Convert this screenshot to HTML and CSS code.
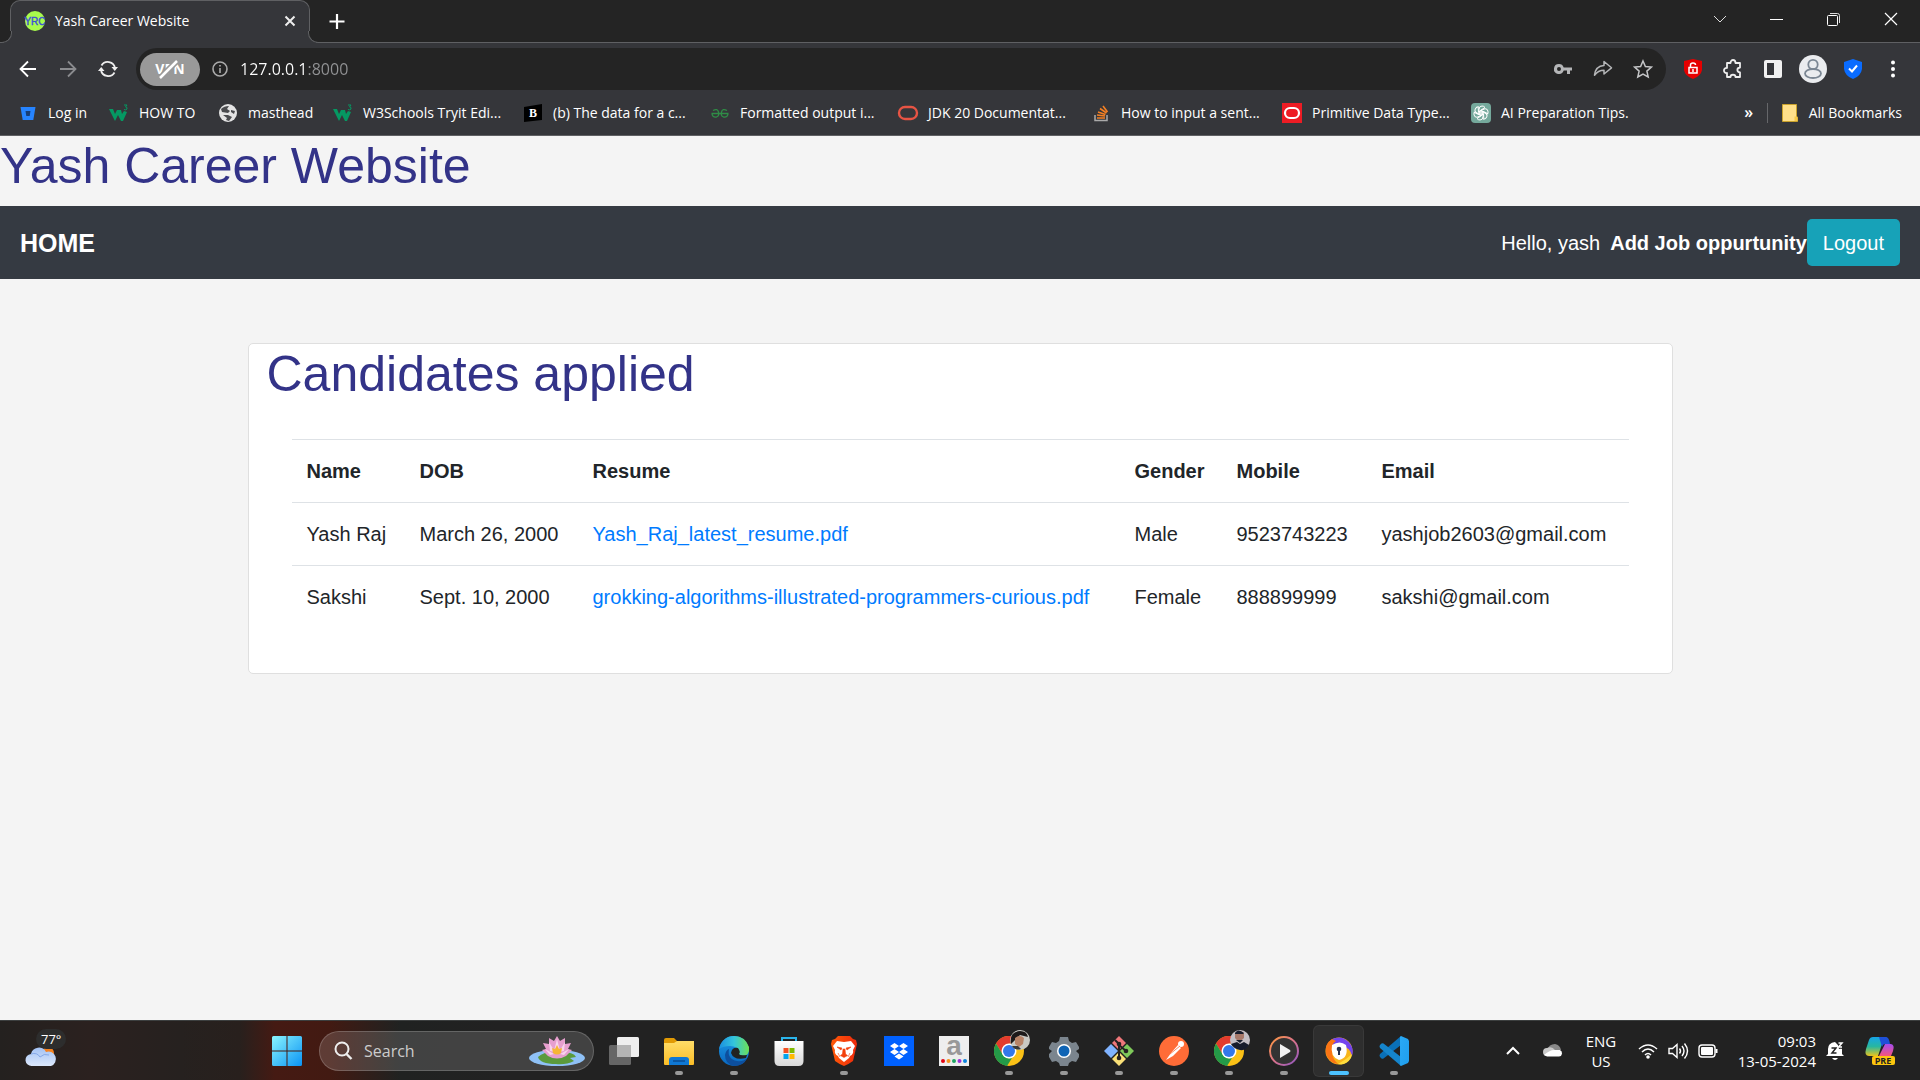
FILE: index.html
```html
<!DOCTYPE html>
<html lang="en">
<head>
<meta charset="utf-8">
<meta name="viewport" content="width=device-width, initial-scale=1">
<title>Yash Career Website</title>
<link rel="stylesheet" href="styles.css">
</head>
<body>
<svg class="defs" aria-hidden="true">
  <defs>
    <symbol id="w3" viewBox="0 0 20 20"><path d="M0 6h4l2 5 2-4h4l1 4 2-3 3 1-4 9h-2l-3-6-3 6H6z" fill="#059862"/><path d="M15 2h3l-1.500 2q2 0 1.500 2-1 1.500-3 .5" fill="none" stroke="#059862"/></symbol>
    <symbol id="chrome" viewBox="0 0 30 30"><circle cx="15" cy="15" r="15" fill="#fbc116"/><path d="M2 7.500A15 15 0 0 1 28 7.500H15L9 19z" fill="#e33b2e"/><path d="M2 7.500L9 19l6 3.500 3-.5-5 8A15 15 0 0 1 2 7.500z" fill="#249a48"/><circle cx="15" cy="15" r="7.500" fill="#fff"/><circle cx="15" cy="15" r="6" fill="#3478ea"/></symbol>
    <linearGradient id="win" x1="0" y1="0" x2="1" y2="1"><stop stop-color="#8af4fd"/><stop offset="1" stop-color="#0a93f5"/></linearGradient>
    <linearGradient id="folder" x1="0" y1="0" x2="0" y2="1"><stop stop-color="#ffdd68"/><stop offset="1" stop-color="#fbbd27"/></linearGradient>
    <linearGradient id="edgeA" x1="0" y1="0" x2="1" y2="0"><stop stop-color="#1b8fe0"/><stop offset=".5" stop-color="#34c5dc"/><stop offset="1" stop-color="#6de154"/></linearGradient>
    <linearGradient id="edgeB" x1="0" y1="0" x2="0" y2="1"><stop stop-color="#1d9be6"/><stop offset="1" stop-color="#0967c0"/></linearGradient>
    <linearGradient id="bag" x1="0" y1="0" x2="0" y2="1"><stop stop-color="#fff"/><stop offset="1" stop-color="#d8d8d8"/></linearGradient>
    <linearGradient id="lion" x1="0" y1="0" x2="1" y2="0"><stop stop-color="#ff5a08"/><stop offset="1" stop-color="#ee2a0c"/></linearGradient>
    <linearGradient id="play" x1="0" y1="0" x2="1" y2="1"><stop stop-color="#ff9a3c"/><stop offset=".5" stop-color="#d9728c"/><stop offset="1" stop-color="#8c55c4"/></linearGradient>
    <linearGradient id="code" x1="0" y1="0" x2="1" y2="1"><stop stop-color="#2aa9f5"/><stop offset="1" stop-color="#1f9eee"/></linearGradient>
    <linearGradient id="cloud" x1="0" y1="0" x2="0" y2="1"><stop stop-color="#a3c2f4"/><stop offset="1" stop-color="#dce8fb"/></linearGradient>
    <linearGradient id="copA" x1="0" y1="0" x2="0" y2="1"><stop stop-color="#16a5e8"/><stop offset=".5" stop-color="#27b7a0"/><stop offset="1" stop-color="#e9c41e"/></linearGradient>
    <linearGradient id="copB" x1="0" y1="0" x2="0" y2="1"><stop stop-color="#a54cf0"/><stop offset="1" stop-color="#f5557a"/></linearGradient>
  </defs>
</svg>

<header class="browser">
  <div class="tabstrip">
    <div class="tab">
      <svg class="i20" viewBox="0 0 20 20"><circle cx="10" cy="10" r="10" fill="#a8fb4c"/><text x="10" y="14" text-anchor="middle" font-family="Liberation Sans" font-size="10" fill="#3d4fd8" stroke="#3d4fd8" stroke-width=".4">YRC</text></svg>
      <span class="tab-title">Yash Career Website</span>
      <button class="tab-close" aria-label="Close tab"><svg class="i12" viewBox="0 0 12 12"><path d="M1.500 1.500l9 9m0-9l-9 9" stroke="#eee" stroke-width="2"/></svg></button>
    </div>
    <button class="new-tab" aria-label="New tab"><svg class="i20" viewBox="0 0 20 20"><path d="M10 3v15M2.500 10.500h15" stroke="#fff" stroke-width="2.200"/></svg></button>
    <div class="window-buttons">
      <button aria-label="Search tabs"><svg class="i16" viewBox="0 0 16 16"><path d="M2 5l6 6 6-6" fill="none" stroke="#ddd"/></svg></button>
      <button aria-label="Minimize"><svg class="i16" viewBox="0 0 16 16"><path d="M1 8.500h13" stroke="#fff"/></svg></button>
      <button aria-label="Restore"><svg class="i16" viewBox="0 0 16 16"><rect x="1.500" y="4.500" width="10" height="10" rx="1" fill="none" stroke="#fff"/><path d="M4 2.500h7.500q2 0 2 2V12" fill="none" stroke="#ddd"/></svg></button>
      <button aria-label="Close"><svg class="i16" viewBox="0 0 16 16"><path d="M2 2l12 12m0-12L2 14" stroke="#fff" stroke-width="1.200"/></svg></button>
    </div>
  </div>

  <div class="toolbar">
    <button class="tool" aria-label="Back"><svg class="i20" viewBox="0 0 20 20"><path d="M18 10H3M10 2.500L2.500 10l7.500 7.500" fill="none" stroke="#fff" stroke-width="1.800"/></svg></button>
    <button class="tool" aria-label="Forward"><svg class="i20" viewBox="0 0 20 20"><path d="M2 10h15M10 2.500l7.500 7.500-7.500 7.500" fill="none" stroke="#8b8c8f" stroke-width="1.800"/></svg></button>
    <button class="tool" aria-label="Reload"><svg class="i20" viewBox="0 0 20 20"><path d="M3.500 6.500A7.300 7.300 0 0 1 17 9M3 11a7.300 7.300 0 0 0 13.500 2.500" fill="none" stroke="#eee" stroke-width="1.800"/><path d="M13.500 8H20l-3.200 4zM0 12h6.500L3.200 8z" fill="#eee"/></svg></button>
    <div class="omnibox">
      <button class="vpn" aria-label="VPN off">VPN<svg class="vpn-slash" viewBox="0 0 22 22"><path d="M2 20L19 3" stroke="#999" stroke-width="6"/><path d="M2 20L19 3" stroke="#fff" stroke-width="2.500"/></svg></button>
      <button class="tool" aria-label="Site information"><svg class="i16" viewBox="0 0 16 16"><circle cx="8" cy="8" r="7" fill="none" stroke="#aaa" stroke-width="1.600"/><path d="M8 7v5M8 4v1.600" stroke="#aaa" stroke-width="1.600"/></svg></button>
      <input class="address" type="text" aria-label="Address" value="127.0.0.1:8000">
      <button class="tool" aria-label="Passwords"><svg class="i20" viewBox="0 0 20 20"><path d="M6 5a5 5 0 1 0 4.700 6.600H14V15h3v-3.400h2V8.400h-8.300A5 5 0 0 0 6 5zm0 3a2 2 0 1 1 0 4 2 2 0 0 1 0-4z" fill="#b5b6b8" fill-rule="evenodd"/></svg></button>
      <button class="tool" aria-label="Share"><svg class="i20" viewBox="0 0 20 20"><path d="M11 2.500l7.500 6.300-7.500 6.200v-3.800q-6 0-9.500 5Q2.500 7 11 6.500z" fill="none" stroke="#b5b6b8" stroke-width="1.500" stroke-linejoin="round"/></svg></button>
      <button class="tool" aria-label="Bookmark this page"><svg class="i20" viewBox="0 0 20 20"><path d="M10 2l2.400 5.500 6 .6-4.500 4 1.300 5.900L10 15l-5.200 3 1.300-5.900-4.500-4 6-.6z" fill="none" stroke="#c5c6c8" stroke-width="1.500"/></svg></button>
    </div>
    <button class="tool" aria-label="Ad blocker"><svg class="i20" viewBox="0 0 20 20"><path d="M10 0l9 2v9q-1 6-9 9-8-3-9-9V2z" fill="#e60000"/><path d="M6 8.500h8V14H6zM7.500 8V6q0-2 2.500-2t2.500 2M10 10v3" fill="none" stroke="#fff" stroke-width="1.500"/></svg></button>
    <button class="tool" aria-label="Extensions"><svg class="i20" viewBox="0 0 20 20"><path d="M4 4h3.500c0-4 5-4 5 0h4.500v4.500c-3.500.5-3.500 4.500 0 5V18H12.500c0-3-5-3-5 0H4v-4c-4 .5-4-5.500 0-5z" fill="none" stroke="#eee" stroke-width="1.800" stroke-linejoin="round"/></svg></button>
    <button class="tool" aria-label="Side panel"><svg class="i20" viewBox="0 0 20 20"><rect x="1" y="1" width="18" height="18" rx="2" fill="#f1f1f1"/><path d="M4 4h7v12H4z" fill="#35363a"/></svg></button>
    <button class="tool" aria-label="Profile"><svg class="i28" viewBox="0 0 28 28"><circle cx="14" cy="14" r="14" fill="#eaecef"/><circle cx="14" cy="9.500" r="4.700" fill="none" stroke="#7b8794" stroke-width="1.800"/><ellipse cx="14" cy="18.500" rx="8" ry="4.500" fill="none" stroke="#7b8794" stroke-width="1.800"/></svg></button>
    <button class="tool" aria-label="Privacy shield"><svg class="i20" viewBox="0 0 20 20"><path d="M10 0l9 3v7q-1 7-9 10-8-3-9-10V3z" fill="#0a6cff"/><path d="M6 9.500l3 3 5-6" fill="none" stroke="#fff" stroke-width="2"/></svg></button>
    <button class="tool" aria-label="Menu"><svg class="i20" viewBox="0 0 20 20"><circle cx="10" cy="3.500" r="2" fill="#fff"/><circle cx="10" cy="10" r="2" fill="#fff"/><circle cx="10" cy="16.500" r="2" fill="#fff"/></svg></button>
  </div>

  <div class="bookmarks">
    <nav class="bookmark-list" aria-label="Bookmarks">
      <a href="#"><svg class="i20" viewBox="0 0 20 20"><path d="M2.500 4h15l-2.200 13H4.700z" fill="#2684ff"/><path d="M7.500 8h5l-.8 5H8.300z" fill="#173e77"/></svg>Log in</a>
      <a href="#"><svg class="i20"><use href="#w3"/></svg>HOW TO</a>
      <a href="#"><svg class="i20" viewBox="0 0 20 20"><circle cx="10" cy="10" r="9" fill="#e4e4e4"/><path d="M3 6q3-3 8-3l-2 3 3 2-2 2-6-1zM5 12h5l4 2-3 4-3-1 1-2zM13 7l4 1-1 3-3-2z" fill="#4a4b4e"/></svg>masthead</a>
      <a href="#"><svg class="i20"><use href="#w3"/></svg>W3Schools Tryit Edi...</a>
      <a href="#"><svg class="i20" viewBox="0 0 20 20"><path d="M1 4l18-3v16L1 19z" fill="#000"/><text x="10" y="14" text-anchor="middle" font-family="Liberation Serif" font-weight="bold" font-size="12" fill="#fff">B</text></svg>(b) The data for a c...</a>
      <a href="#"><svg class="i20" viewBox="0 0 20 20"><path d="M1.500 10.500h17M3 7.500q4.500-2.500 5.500 1.500t-2 5q-4 .5-4.500-3M17 7.500q-4.500-2.500-5.500 1.500t2 5q4 .5 4.500-3" fill="none" stroke="#2f8d46" stroke-width="1.300"/></svg>Formatted output i...</a>
      <a href="#"><svg class="i20" viewBox="0 0 20 20"><rect x="1" y="4" width="18" height="12" rx="6" fill="none" stroke="#e75444" stroke-width="2.400"/></svg>JDK 20 Documentat...</a>
      <a href="#"><svg class="i20" viewBox="0 0 20 20"><path d="M4 12v5.500h12V12" fill="none" stroke="#aaa" stroke-width="1.500"/><path d="M6 15h8M6 12l8 1M7 9l7.500 2.500M9 5.500l6.500 4.500M12 3l4.500 6" stroke="#f48024" stroke-width="1.600"/></svg>How to input a sent...</a>
      <a href="#"><svg class="i20" viewBox="0 0 20 20"><path d="M0 0h20v20H0z" fill="#ed1c24"/><rect x="3" y="5" width="14" height="10" rx="5" fill="none" stroke="#fff" stroke-width="2.200"/></svg>Primitive Data Type...</a>
      <a href="#"><svg class="i20" viewBox="0 0 20 20"><rect width="20" height="20" rx="4" fill="#75a99c"/><g fill="none" stroke="#fff"><path id="petal" d="M8 12V6.500Q8 3 11 3q2 0 3 1.500L10 7v2.500"/><use href="#petal" transform="rotate(60 10 10)"/><use href="#petal" transform="rotate(120 10 10)"/><use href="#petal" transform="rotate(180 10 10)"/><use href="#petal" transform="rotate(240 10 10)"/><use href="#petal" transform="rotate(300 10 10)"/></g></svg>AI Preparation Tips.</a>
    </nav>
    <button class="more" aria-label="More bookmarks">»</button>
    <a class="all" href="#"><svg class="i20" viewBox="0 0 20 20"><path d="M3.500 1.500h14v13h1v4h-15z" fill="#ffe08a" stroke="#c9a22c"/><path d="M15.500 18v-4.500h3V18z" fill="#f7c948"/></svg>All Bookmarks</a>
  </div>
</header>

<main class="page">
  <h1 class="title">Yash Career Website</h1>
  <nav class="navbar">
    <a class="brand" href="#">HOME</a>
    <div class="nav-right">
      <span class="hello">Hello, yash</span>
      <a class="add-job" href="#">Add Job oppurtunity</a>
      <button class="logout">Logout</button>
    </div>
  </nav>
  <section class="card">
    <h2 class="title">Candidates applied</h2>
    <div class="table-wrap">
      <table class="candidates">
        <colgroup><col class="c-name"><col class="c-dob"><col><col class="c-gender"><col class="c-mobile"><col class="c-email"></colgroup>
        <thead><tr><th>Name</th><th>DOB</th><th>Resume</th><th>Gender</th><th>Mobile</th><th>Email</th></tr></thead>
        <tbody>
          <tr><td>Yash Raj</td><td>March 26, 2000</td><td><a href="#">Yash_Raj_latest_resume.pdf</a></td><td>Male</td><td>9523743223</td><td>yashjob2603@gmail.com</td></tr>
          <tr><td>Sakshi</td><td>Sept. 10, 2000</td><td><a href="#">grokking-algorithms-illustrated-programmers-curious.pdf</a></td><td>Female</td><td>888899999</td><td>sakshi@gmail.com</td></tr>
        </tbody>
      </table>
    </div>
  </section>
</main>

<footer class="taskbar">
  <button class="weather" aria-label="Weather">
    <svg class="weather-icon" viewBox="0 0 32 24"><circle cx="23" cy="9" r="6" fill="#f58220"/><path d="M7 22a6 6 0 0 1-1-12A8 8 0 0 1 21 8a7 7 0 0 1 5 14z" fill="url(#cloud)"/><path d="M6 10q6-2 9 3 4-4 9-2" fill="none" stroke="#86a9e8"/></svg>
    <span class="temp">77°</span>
  </button>
  <div class="apps">
    <button class="start" aria-label="Start"><svg class="i30" viewBox="0 0 30 30"><path d="M1.500 0H14.500v14.500H0V1.500Q0 0 1.500 0zM15.500 0h13Q30 0 30 1.500v13H15.500zM0 15.500h14.500V30h-13Q0 30 0 28.500zM15.500 15.500H30v13q0 1.500-1.500 1.500h-13z" fill="url(#win)"/></svg></button>
    <label class="search">
      <svg class="i20" viewBox="0 0 20 20"><circle cx="9" cy="8" r="6.500" fill="none" stroke="#eee" stroke-width="2"/><path d="M13.500 13l5 5" stroke="#eee" stroke-width="2.400"/></svg>
      <input type="text" placeholder="Search" aria-label="Search">
      <svg class="lotus" viewBox="0 0 56 30"><ellipse cx="28" cy="22" rx="28" ry="8" fill="#8fc1f6"/><path d="M9 21q6-6 22-5 14 0 16 5l-6 1 4 3q-8 4-18 3-16 0-18-7z" fill="#5b9a3c"/><path d="M28 0l3 5 5-3v6l6-1-3 6 4 1-6 6q-9 5-18 0l-6-6 4-1-3-6 6 1V2l5 3z" fill="#e79fcf"/><path d="M28 3l3 12h-6zM20 6l6 10-5-1zM36 6l-6 10 5-1zM16 13l9 5-4 1zM40 13l-9 5 4 1z" fill="#f9d4ec"/><path d="M28 9l2 4 3-1-1 5q-4 3-8 0l-1-5 3 1z" fill="#f7b635"/></svg>
    </label>
    <button class="app" aria-label="Task view"><svg class="i30" viewBox="0 0 30 30"><rect y="9" width="22" height="20" rx="1.500" fill="#666"/><rect x="8" y="1" width="22" height="20" rx="1.500" fill="#efefef"/><path d="M8 9h14v12H8z" fill="#b5b5b5"/></svg></button>
    <button class="app open" aria-label="File Explorer"><svg class="i30" viewBox="0 0 30 30"><path d="M0 4q0-2 2-2h8l3 3v5H0z" fill="#e19a04"/><path d="M0 7h10l3-2h17v23q0 1-1 1H1q-1 0-1-1z" fill="url(#folder)"/><path d="M5 29v-5q0-3 3-3h14q3 0 3 3v5z" fill="#0f78d4"/><path d="M9 25h12" stroke="#0a4d94" stroke-width="1.500"/></svg></button>
    <button class="app open" aria-label="Edge"><svg class="i30" viewBox="0 0 30 30"><circle cx="15" cy="15" r="15" fill="url(#edgeB)"/><path d="M0 13C2 4 8 0 15 0q11 0 15 11 1 9-7 9-5 0-3-4-1-6-9-6-7 0-11 3z" fill="url(#edgeA)"/><path d="M10 13q-2 10 8 12 6 1 10-3-3 8-13 8-9-2-9-11 1-5 4-6z" fill="#0d4f9e"/><path d="M12 17q1-6 7-5 3 4 1 6 1 2 8 1l-1 3q-12 3-15-5z" fill="#222"/></svg></button>
    <button class="app" aria-label="Microsoft Store"><svg class="i30" viewBox="0 0 30 30"><path d="M8 6V2h14v4" fill="none" stroke="#2ab5ec" stroke-width="2"/><path d="M.5 5h29v20q0 5-5 5h-19q-5 0-5-5z" fill="url(#bag)"/><path d="M9.500 12h5v5h-5z" fill="#f25022"/><path d="M15.500 12h5v5h-5z" fill="#7fba00"/><path d="M9.500 18h5v5h-5z" fill="#00a4ef"/><path d="M15.500 18h5v5h-5z" fill="#ffb900"/></svg></button>
    <button class="app open" aria-label="Brave"><svg class="i30" viewBox="0 0 30 30"><path d="M9 0h12l3 3 3 1 1 4-4 17q-4 3-9 5-5-2-9-5L2 8l1-4 3-1z" fill="url(#lion)"/><path d="M8 5l7 1 7-1 4 5-2 4q1 4-3 6l-1 2-5 4-5-4-1-2q-4-2-3-6L4 10z" fill="#fff"/><path d="M8 11l5 1-1 2zM22 11l-5 1 1 2zM14 13h2l.5 5 2 1.500-3.500 2-3.500-2 2-1.500zM9 17l2 4M21 17l-2 4" fill="#f3400c" stroke="#f3400c" stroke-width=".6"/></svg></button>
    <button class="app" aria-label="Dropbox"><svg class="i30" viewBox="0 0 30 30"><path d="M0 0h30v30H0z" fill="#0061ff"/><path d="M10.500 7l4.500 3-4.500 3L6 10zM19.500 7l4.500 3-4.500 3-4.500-3zM10.500 13l4.500 3-4.500 3L6 16zM19.500 13l4.500 3-4.500 3-4.500-3zM15 17.500l4.500 3-4.500 3-4.500-3z" fill="#fff"/></svg></button>
    <button class="app" aria-label="Amazon"><svg class="i30" viewBox="0 0 30 30"><path d="M0 0h30v30H0z" fill="#eee"/><text x="15" y="19" text-anchor="middle" font-family="Liberation Sans" font-weight="bold" font-size="28" fill="#999">a</text><circle cx="4" cy="25" r="2" fill="#e30613"/><circle cx="9.500" cy="25" r="2" fill="#f7941d"/><circle cx="15" cy="25" r="2" fill="#1fa463"/><circle cx="20.500" cy="25" r="2" fill="#9b30d9"/><circle cx="26" cy="25" r="2" fill="#0a84dd"/></svg></button>
    <button class="app open" aria-label="Chrome, first profile"><svg class="i30" viewBox="0 0 30 30"><use href="#chrome"/><circle cx="26" cy="4" r="10" fill="#c9c9c4"/><path d="M17 8q-2-12 9-13 7 0 8 6l-8-2-3 3z" fill="#1d1a1a"/><path d="M21 2q5-4 9 0l-1 6-4 3-4-3z" fill="#b98468"/><path d="M18 10l6 0 3 3q-6 2-9-3z" fill="#3b3a38"/></svg></button>
    <button class="app open" aria-label="Settings"><svg class="i30" viewBox="0 0 30 30"><path d="M11 1h8l1 4 3 2 4-1 3 5v2l-3 2 3 3v3l-3 5-4-1-3 2-1 3h-8l-1-3-3-2-4 1-3-5v-3l3-3-3-2v-2l3-5 4 1 3-2z" fill="#7b858e"/><circle cx="15" cy="15" r="7" fill="#fff"/><circle cx="15" cy="15" r="5.500" fill="#0f64b5"/></svg></button>
    <button class="app open" aria-label="Git"><svg class="i30" viewBox="0 0 30 30"><path d="M15 0l7 7-7 7-7-7z" fill="#f0777a"/><path d="M7 8l7 7-7 7-7-7z" fill="#80b3ff"/><path d="M23 8l7 7-7 7-7-7z" fill="#7fc95a"/><path d="M15 16l7 7-7 7-7-7z" fill="#fae078"/><path d="M11 4l4 4v15M15 9l7 6" fill="none" stroke="#262222" stroke-width="2"/><circle cx="15" cy="8" r="2.300" fill="#262222"/><circle cx="22" cy="15" r="2.300" fill="#262222"/><circle cx="15" cy="22" r="2.300" fill="#262222"/></svg></button>
    <button class="app open" aria-label="Postman"><svg class="i30" viewBox="0 0 30 30"><circle cx="15" cy="15" r="15" fill="#ff6c37"/><circle cx="22" cy="8" r="3" fill="#fff"/><path d="M19 9l3 3-8 8-3-2zM12 17l2 3-7 4z" fill="#fff"/><path d="M11 18l10-8" stroke="#ff6c37" stroke-width=".8"/></svg></button>
    <button class="app open" aria-label="Chrome, second profile"><svg class="i30" viewBox="0 0 30 30"><use href="#chrome"/><circle cx="26" cy="4" r="10" fill="#c4bfc5"/><path d="M21-3q4-4 9 0v5q-5 6-9 0z" fill="#a8796a"/><path d="M21-3q3-5 9 0l-1 1h-8zM22 4h7l-3 3zM17 8l6-2 3 2 4-2 5 3q-3 6-9 5-6-1-9-6z" fill="#171c2c"/></svg></button>
    <button class="app open" aria-label="Media Player"><svg class="i30" viewBox="0 0 30 30"><circle cx="15" cy="15" r="14" fill="#333" stroke="url(#play)" stroke-width="2"/><path d="M11 8l10 6q1 1 0 2l-10 6z" fill="#f2f2f2"/></svg></button>
    <button class="app open active" aria-label="Secure Browser"><svg class="i30" viewBox="0 0 30 30"><circle cx="15" cy="15" r="13.500" fill="#f8b61b"/><path d="M8 3Q20-2 27 9q3 6 1 11-2-9-9-9L6 9z" fill="#7444ee"/><path d="M8 3Q0 8 2 18q3 9 12 10-6-5-6-13Q7 8 12 5z" fill="#fb7515"/><path d="M14 28q8 2 13-6l1-4-6 5z" fill="#ffdc3c"/><path d="M8 9q8-5 14 0 3 13-7 15-9-3-7-15z" fill="#fff"/><circle cx="15" cy="13" r="2.300" fill="#25304f"/><path d="M14 13h2v6h-2z" fill="#25304f"/></svg></button>
    <button class="app open" aria-label="Visual Studio Code"><svg class="i30" viewBox="0 0 30 30"><path d="M22 0L1 18q-1 2 0 3l1.500 1.500q1 .5 2 0L22 9z" fill="#0a70b8"/><path d="M22 30L1 12q-1-2 0-3l1.500-1.500q1-.5 2 0L22 21z" fill="#1585cc"/><path d="M22 0l7 3 1 2v20l-1 2-7 3-1-1V1z" fill="url(#code)"/></svg></button>
  </div>
  <div class="tray">
    <button class="tray-btn" aria-label="Hidden icons"><svg class="i20" viewBox="0 0 20 20"><path d="M4 13l6-6 6 6" fill="none" stroke="#fff" stroke-width="2"/></svg></button>
    <button class="tray-btn" aria-label="OneDrive"><svg class="i20" viewBox="0 0 20 20"><path d="M4 9q2-6 8-6 5 1 6 6z" fill="#888"/><path d="M4 15a4 4 0 0 1 0-8q5-2 8 2l6 4z" fill="#c9c9c9"/><path d="M1 14q6-5 10-5h6a3.400 3.400 0 0 1-1 6.500H4z" fill="#fff"/></svg></button>
    <button class="lang">ENG<br>US</button>
    <button class="status" aria-label="Network, volume, battery">
      <svg class="i20" viewBox="0 0 20 20"><path d="M1 8q9-8 18 0M4 11q6-6 12 0M7 14q3-3 6 0" fill="none" stroke="#fff" stroke-width="1.500"/><circle cx="10" cy="16" r="1.800" fill="#fff"/></svg>
      <svg class="i20" viewBox="0 0 20 20"><path d="M1 7.500h3.500L9 3.500v13l-4.500-4H1z" fill="none" stroke="#fff" stroke-width="1.400"/><path d="M11.500 7.500q2 2.500 0 5M14 5q4 5 0 10M16.500 2.500q6 7.500 0 15" fill="none" stroke="#fff" stroke-width="1.400"/></svg>
      <svg class="i20" viewBox="0 0 20 20"><rect x="1" y="4" width="16" height="12" rx="3" fill="none" stroke="#fff" stroke-width="1.400"/><rect x="3" y="6" width="12" height="8" rx="1" fill="#fff"/><path d="M18.500 8v4" stroke="#fff" stroke-width="2"/></svg>
    </button>
    <button class="clock">09:03<br>13-05-2024</button>
    <button class="bell" aria-label="Notifications"><svg class="i20" viewBox="0 0 20 20"><path d="M3 8q0-6 7-7l7 7v5l2 2H1l2-2z" fill="#fff"/><path d="M7 17h6q-3 4-6 0z" fill="#fff"/><path d="M12 0h8v7l-6 1z" fill="#222"/><path d="M6.500 7H11l-4 5h4.500" fill="none" stroke="#222" stroke-width="1.500"/><path d="M13.500 2H17l-3.500 4H17" fill="none" stroke="#fff" stroke-width="1.500"/></svg></button>
    <button class="copilot" aria-label="Copilot"><svg class="i30" viewBox="0 0 30 30"><path d="M8 1h12q3 0 4 6h-4q-3 0-4 4l-3 9H4q-5 0-3-7l3-9q1-3 4-3z" fill="url(#copA)"/><path d="M14 1h7q3 0 4 7h-5q-2 0-3 3z" fill="#1e50d8"/><path d="M20 8h6q4 1 2 7l-2 5H14z" fill="url(#copB)"/><rect x="7" y="20" width="23" height="9" rx="2" fill="#fcc60e"/><text x="18" y="28" text-anchor="middle" font-family="Open Sans" font-weight="bold" font-size="9" fill="#222">PRE</text></svg></button>
  </div>
</footer>
</body>
</html>
```
FILE: styles.css
```css
* { box-sizing: border-box; }

body {
  margin: 0;
  min-height: 100vh;
  display: flex;
  flex-direction: column;
  background: #f4f4f4;
  color: #212529;
  font: 20px/30px "Liberation Sans", Arial, sans-serif;
}

button, input {
  margin: 0;
  padding: 0;
  border: 0;
  background: none;
  color: inherit;
  font: inherit;
}

a { text-decoration: none; color: #007bff; }
svg { display: block; flex: none; overflow: visible; }
.defs { position: absolute; width: 0; height: 0; }
.i12 { width: 12px; height: 12px; }
.i16 { width: 16px; height: 16px; }
.i20 { width: 20px; height: 20px; }
.i28 { width: 28px; height: 28px; }
.i30 { width: 30px; height: 30px; }

/* Browser frame */
.browser {
  background: #35363a;
  border-bottom: 1px solid #5f6063;
  color: #fff;
  font: 14px/20px "Open Sans", "Segoe UI", sans-serif;
}

.tabstrip {
  display: flex;
  height: 43px;
  padding-left: 10px;
  background: #242424;
  border-bottom: 1px solid #5f6063;
}

.tab {
  position: relative;
  display: flex;
  align-items: center;
  width: 300px;
  height: 43px;
  padding: 0 11px 2px 14px;
  background: #35363a;
  border: 1px solid #5f6063;
  border-bottom: 0;
  border-radius: 10px 10px 0 0;
}

.tab::before, .tab::after {
  content: "";
  position: absolute;
  bottom: 0;
  width: 11px;
  height: 11px;
  border: 0 solid #5f6063;
  border-bottom-width: 1px;
  background: #242424;
}
.tab::before {
  left: -11px;
  border-right-width: 1px;
  border-bottom-right-radius: 10px;
  box-shadow: 4px 4px 0 #35363a;
  clip-path: inset(0 -1px 0 0);
}
.tab::after {
  right: -11px;
  border-left-width: 1px;
  border-bottom-left-radius: 10px;
  box-shadow: -4px 4px 0 #35363a;
  clip-path: inset(0 0 0 -1px);
}

.tab-title { margin-left: 10px; flex: 1; }
.tab-close { padding: 2px; }
.new-tab { padding: 0 17px; }

.window-buttons { display: flex; margin-left: auto; height: 37px; padding-right: 1px; }
.window-buttons button { width: 57px; display: grid; place-items: center; }

.toolbar { display: flex; align-items: center; height: 52px; padding: 0 7px 0 8px; }
.tool { width: 40px; height: 40px; display: grid; place-items: center; flex: none; }

.omnibox {
  display: flex;
  align-items: center;
  flex: 1;
  height: 42px;
  margin: 0 7px 0 8px;
  padding: 0 3px 0 4px;
  border-radius: 21px;
  background: #242424;
}

.vpn {
  position: relative;
  width: 60px;
  height: 33px;
  border-radius: 17px;
  background: #999;
  font: bold 14px/20px "Open Sans", sans-serif;
}
.vpn-slash { position: absolute; left: 18px; top: 5px; width: 22px; height: 22px; }

.address {
  flex: 1;
  min-width: 0;
  height: 32px;
  font-size: 16px;
  background: linear-gradient(90deg, #fff 66px, #929395 66px);
  -webkit-background-clip: text;
  background-clip: text;
  -webkit-text-fill-color: transparent;
}

.bookmarks { display: flex; align-items: center; height: 40px; padding: 0 18px 4px 18px; }
.bookmarks a { display: flex; align-items: center; gap: 10px; color: #fff; white-space: nowrap; }
.bookmark-list {
  display: grid;
  grid-template-columns: 91px 109px 115px 190px 187px 188px 193px 191px 189px 1fr;
  flex: 1;
}
.more { width: 36px; padding-bottom: 3px; font-size: 16px; font-weight: 600; }
.all { padding-left: 11px; border-left: 1px solid #66676a; }

/* Career site */
.page { flex: 1; }
.title { margin: 0 0 10px; color: #333388; font-size: 50px; line-height: 60px; font-weight: 400; }

.navbar {
  display: flex;
  align-items: center;
  justify-content: space-between;
  min-height: 73px;
  padding: 10px 20px;
  background: #353a42;
}
.navbar a { color: #fff; font-weight: 700; }
.navbar .brand { font-size: 25px; }
.nav-right { display: flex; align-items: center; color: #fff; }
.add-job { margin-left: 10px; }
.logout { height: 47px; padding: 0 16px; border-radius: 5px; background: #17a2b8; }

.card {
  max-width: 1425px;
  margin: 64px auto 0;
  padding: 0 18px 20px;
  border: 1px solid #dfdfdf;
  border-radius: 5px;
  background: #fff;
}
.table-wrap { padding: 25px; }
.candidates { width: 100%; table-layout: fixed; border-collapse: collapse; }
.candidates th, .candidates td { padding: 16px 15px; border-top: 1px solid #dee2e6; text-align: left; white-space: nowrap; }
.c-name { width: 113px; }
.c-dob { width: 173px; }
.c-gender { width: 102px; }
.c-mobile { width: 145px; }
.c-email { width: 262px; }

/* Taskbar */
.taskbar {
  display: flex;
  align-items: center;
  height: 60px;
  border-top: 1px solid #3c3f3f;
  background: linear-gradient(90deg, #24211f, #2b211f 90px, #26211f 180px, #28201d 240px, #451a13 275px, #421a12 330px, #202221 400px, #222 500px);
  color: #fff;
  font: 15px/20px "Open Sans", "Segoe UI", sans-serif;
}

.weather { position: relative; width: 66px; height: 50px; margin-left: 10px; }
.weather-icon { position: absolute; left: 15px; top: 18px; width: 32px; height: 24px; }
.temp {
  position: absolute;
  left: 26px;
  top: 3px;
  padding: 0 5px;
  border-radius: 10px;
  background: #2d2d2d;
  font-size: 13px;
}

.apps { display: flex; align-items: center; margin-left: 186px; }
.start { width: 50px; display: grid; place-items: center; }
.search {
  display: flex;
  align-items: center;
  gap: 11px;
  width: 275px;
  height: 40px;
  margin: 0 2px 0 7px;
  padding: 0 8px 0 13px;
  border: 1px solid #ffffff30;
  border-radius: 20px;
  background: #ffffff26;
}
.search input { flex: 1; min-width: 0; font-size: 16px; }
.search input::placeholder { color: #ccc; opacity: 1; }
.lotus { width: 56px; height: 30px; }

.app {
  position: relative;
  display: grid;
  place-items: center;
  width: 49px;
  height: 50px;
  margin: 0 3px;
  border-radius: 5px;
}
.open::after {
  content: "";
  position: absolute;
  bottom: 1px;
  left: 21px;
  width: 8px;
  height: 4px;
  border-radius: 2px;
  background: #999;
}
.active { background: #2e2e2e; box-shadow: 0 0 0 1px #393939; }
.active::after { left: 15px; width: 20px; background: #4cc2ff; }

.tray { display: flex; align-items: center; margin-left: auto; padding-right: 25px; }
.tray-btn { width: 40px; height: 40px; display: grid; place-items: center; }
.lang { width: 56px; text-align: center; }
.status { display: flex; gap: 10px; margin-left: 9px; }
.clock { width: 98px; text-align: right; }
.bell { margin-left: 9px; }
.copilot { margin-left: 20px; }
```
